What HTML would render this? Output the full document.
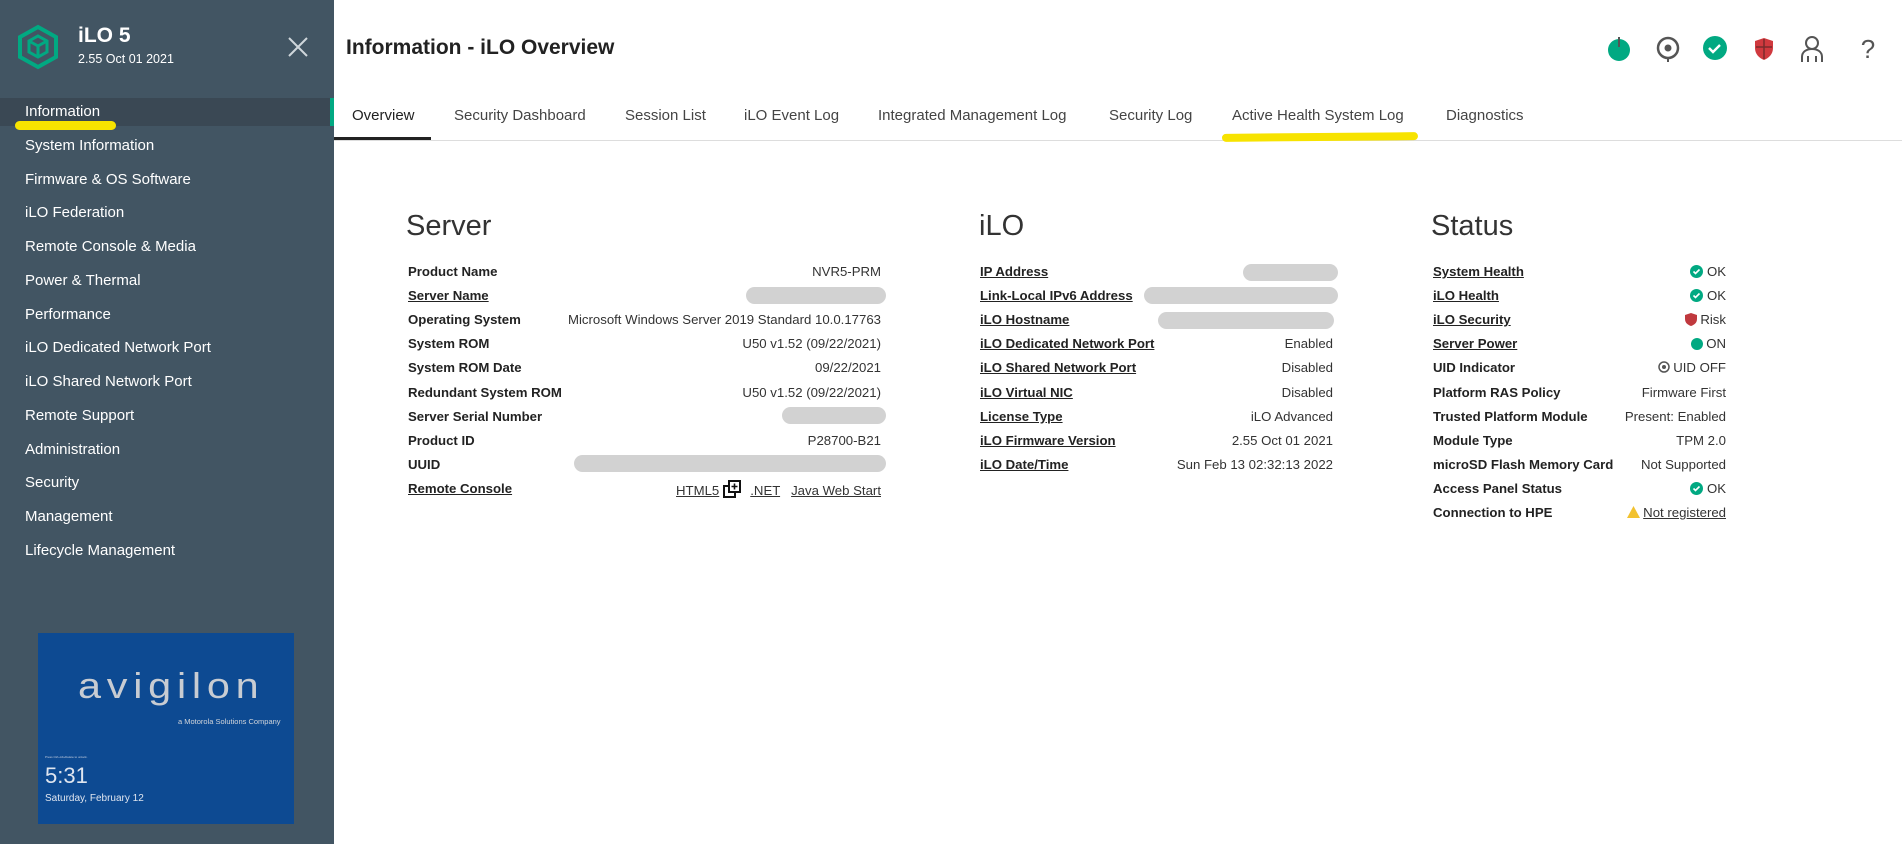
<!DOCTYPE html>
<html><head><meta charset="utf-8">
<style>
*{margin:0;padding:0;box-sizing:border-box}
body{width:1902px;height:844px;overflow:hidden;background:#fff;font-family:"Liberation Sans",sans-serif;color:#333;position:relative}
#side{position:absolute;left:0;top:0;width:334px;height:844px;background:#425563}
.nav{position:absolute;left:25px;color:#fff;font-size:15px;line-height:20px}
.a{position:absolute}
.row{position:absolute;font-size:13.2px;line-height:18px;white-space:nowrap}
.lb{font-weight:bold;color:#222}
.u{text-decoration:underline}
.v{text-align:right;color:#333}
.blob{position:absolute;height:17px;border-radius:9px;background:#d2d2d2}
.tab{position:absolute;top:107px;font-size:15px;color:#444;white-space:nowrap}
h2{position:absolute;font-weight:normal;font-size:29px;color:#333;top:210px}
</style></head><body>
<div id="side">
 <svg class="a" style="left:16px;top:24px" width="44" height="46" viewBox="0 0 44 46"><g fill="none" stroke="#01a982" stroke-width="4"><path d="M22 3 L40 13 L40 33 L22 43 L4 33 L4 13 Z"/><path d="M22 12 L31 17 L31 28 L22 33 L13 28 L13 17 Z" stroke-width="3"/><path d="M22 22 L22 33 M22 22 L13 17 M22 22 L31 17" stroke-width="3"/></g></svg>
 <div class="a" style="left:78px;top:24px;color:#fff;font-weight:bold;font-size:21px">iLO 5</div>
 <div class="a" style="left:78px;top:52px;color:#fff;font-size:12.5px">2.55 Oct 01 2021</div>
 <svg class="a" style="left:287px;top:36px" width="22" height="22"><path d="M2 2L20 20M20 2L2 20" stroke="#cfd6db" stroke-width="2"/></svg>
 <div class="a" style="left:0;top:98px;width:334px;height:28px;background:#3a4854"></div>
 <div class="a" style="left:330px;top:98px;width:4px;height:28px;background:#01a982"></div>
 <div class="a" style="left:15px;top:121px;width:101px;height:9px;border-radius:5px;background:#f7e300"></div>
 <div class="nav" style="top:102px">Information</div>
 <div class="nav" style="top:136px">System Information</div>
 <div class="nav" style="top:170px">Firmware &amp; OS Software</div>
 <div class="nav" style="top:203px">iLO Federation</div>
 <div class="nav" style="top:237px">Remote Console &amp; Media</div>
 <div class="nav" style="top:271px">Power &amp; Thermal</div>
 <div class="nav" style="top:305px">Performance</div>
 <div class="nav" style="top:338px">iLO Dedicated Network Port</div>
 <div class="nav" style="top:372px">iLO Shared Network Port</div>
 <div class="nav" style="top:406px">Remote Support</div>
 <div class="nav" style="top:440px">Administration</div>
 <div class="nav" style="top:473px">Security</div>
 <div class="nav" style="top:507px">Management</div>
 <div class="nav" style="top:541px">Lifecycle Management</div>
 <div class="a" style="left:38px;top:633px;width:256px;height:191px;background:#0d4a92">
  <div class="a" style="left:40px;top:32px;color:#c8ccd2;font-size:36px;letter-spacing:5px;transform:scaleX(1.15);transform-origin:left">avigilon</div>
  <div class="a" style="left:140px;top:84px;color:#d0d4da;font-size:7.5px">a Motorola Solutions Company</div>
  <div class="a" style="left:7px;top:122px;color:#c8d0e0;font-size:3px">Press Ctrl+Alt+Delete to unlock.</div>
  <div class="a" style="left:7px;top:130px;color:#dfe5ef;font-size:22px">5:31</div>
  <div class="a" style="left:7px;top:160px;color:#dfe5ef;font-size:10px">Saturday, February 12</div>
 </div>
</div>
<div class="a" style="left:346px;top:36px;font-weight:bold;font-size:21px;color:#222">Information - iLO Overview</div>
<svg class="a" style="left:1606px;top:34px" width="280" height="30" viewBox="0 0 280 30">
 <circle cx="13" cy="16" r="11" fill="#01a982"/><path d="M13 3V13" stroke="#555" stroke-width="2"/>
 <circle cx="62" cy="14" r="10" fill="none" stroke="#555" stroke-width="2.5"/><circle cx="62" cy="14" r="3.5" fill="#555"/><path d="M62 24v4" stroke="#555" stroke-width="2"/>
 <circle cx="109" cy="14" r="12" fill="#01a982"/><path d="M103 14l4 4 7-7" stroke="#fff" stroke-width="2.4" fill="none"/>
 <path d="M158 4l9 3v7c0 6-4 10-9 12c-5-2-9-6-9-12V7z" fill="#d0393e"/><path d="M158 5v20M150 13h16" stroke="#7a2a2c" stroke-width="1.5"/>
 <circle cx="206" cy="9" r="6" fill="none" stroke="#555" stroke-width="2"/><path d="M196 28v-5c0-5 4-8 10-8s10 3 10 8v5M202 22v6M210 22v6" fill="none" stroke="#555" stroke-width="2"/>
 <text x="262" y="24" font-size="26" fill="#555" text-anchor="middle" font-family="Liberation Sans">?</text>
</svg>
<div class="tab" style="left:352px;color:#222">Overview</div>
<div class="tab" style="left:454px">Security Dashboard</div>
<div class="tab" style="left:625px">Session List</div>
<div class="tab" style="left:744px">iLO Event Log</div>
<div class="tab" style="left:878px">Integrated Management Log</div>
<div class="tab" style="left:1109px">Security Log</div>
<div class="tab" style="left:1232px">Active Health System Log</div>
<div class="tab" style="left:1446px">Diagnostics</div>
<div class="a" style="left:334px;top:140px;width:1568px;height:1px;background:#ddd"></div>
<div class="a" style="left:334px;top:137px;width:97px;height:3px;background:#222"></div>
<div class="a" style="left:1222px;top:133px;width:196px;height:8px;border-radius:4px;background:#f7e300;transform:rotate(-0.5deg)"></div>

<h2 style="left:406px">Server</h2>
<h2 style="left:979px">iLO</h2>
<h2 style="left:1431px">Status</h2>

<div id="rows"></div>
<script>
function col(lx,rx,items){let h='';items.forEach((it,i)=>{const t=263+i*24.1;h+=`<div class="row lb${it[2]?' u':''}" style="left:${lx}px;top:${t}px">${it[0]}</div>`;if(it[1])h+=`<div class="row v" style="right:${1902-rx}px;top:${t}px">${it[1]}</div>`;});return h;}
const ok='<svg width="13" height="13" style="vertical-align:-2px"><circle cx="6.5" cy="6.5" r="6.5" fill="#01a982"/><path d="M3.5 6.5l2 2 4-4" stroke="#fff" stroke-width="1.6" fill="none"/></svg> OK';
let h=col(408,881,[["Product Name","NVR5-PRM"],["Server Name","",1],["Operating System","Microsoft Windows Server 2019 Standard 10.0.17763"],["System ROM","U50 v1.52 (09/22/2021)"],["System ROM Date","09/22/2021"],["Redundant System ROM","U50 v1.52 (09/22/2021)"],["Server Serial Number",""],["Product ID","P28700-B21"],["UUID",""],["Remote Console",'<span class="u">HTML5</span> <svg width="20" height="18" style="vertical-align:-3px"><rect x="1" y="6" width="11" height="11" fill="#fff" stroke="#111" stroke-width="2"/><rect x="6" y="1" width="11" height="11" fill="#fff" stroke="#111" stroke-width="2"/><path d="M11.5 3.5v6M8.5 6.5h6" stroke="#111" stroke-width="1.6"/></svg> &nbsp;<span class="u">.NET</span> &nbsp;&nbsp;<span class="u">Java Web Start</span>',1]]);
h+=col(980,1333,[["IP Address","",1],["Link-Local IPv6 Address","",1],["iLO Hostname","",1],["iLO Dedicated Network Port","Enabled",1],["iLO Shared Network Port","Disabled",1],["iLO Virtual NIC","Disabled",1],["License Type","iLO Advanced",1],["iLO Firmware Version","2.55 Oct 01 2021",1],["iLO Date/Time","Sun Feb 13 02:32:13 2022",1]]);
h+=col(1433,1726,[["System Health",ok,1],["iLO Health",ok,1],["iLO Security",'<svg width="12" height="13" style="vertical-align:-2px"><path d="M6 0l6 2v4c0 4-3 6-6 7C3 12 0 10 0 6V2z" fill="#c0393e"/></svg> Risk',1],["Server Power",'<svg width="12" height="13" style="vertical-align:-2px"><circle cx="6" cy="7" r="6" fill="#01a982"/></svg> ON',1],["UID Indicator",'<svg width="12" height="13" style="vertical-align:-2px"><circle cx="6" cy="6" r="5" fill="none" stroke="#555" stroke-width="1.5"/><circle cx="6" cy="6" r="2" fill="#555"/></svg> UID OFF'],["Platform RAS Policy","Firmware First"],["Trusted Platform Module","Present: Enabled"],["Module Type","TPM 2.0"],["microSD Flash Memory Card","Not Supported"],["Access Panel Status",ok],["Connection to HPE",'<svg width="13" height="12" style="vertical-align:-1px"><path d="M6.5 0L13 12H0z" fill="#f2c230"/></svg> <span class="u">Not registered</span>']]);
const b=[[746,886,287],[782,886,407],[574,886,455],[1243,1338,264],[1144,1338,287],[1158,1334,312]];
b.forEach(x=>{h+=`<div class="blob" style="left:${x[0]}px;width:${x[1]-x[0]}px;top:${x[2]}px"></div>`});
document.getElementById('rows').innerHTML=h;
</script>
</body></html>
